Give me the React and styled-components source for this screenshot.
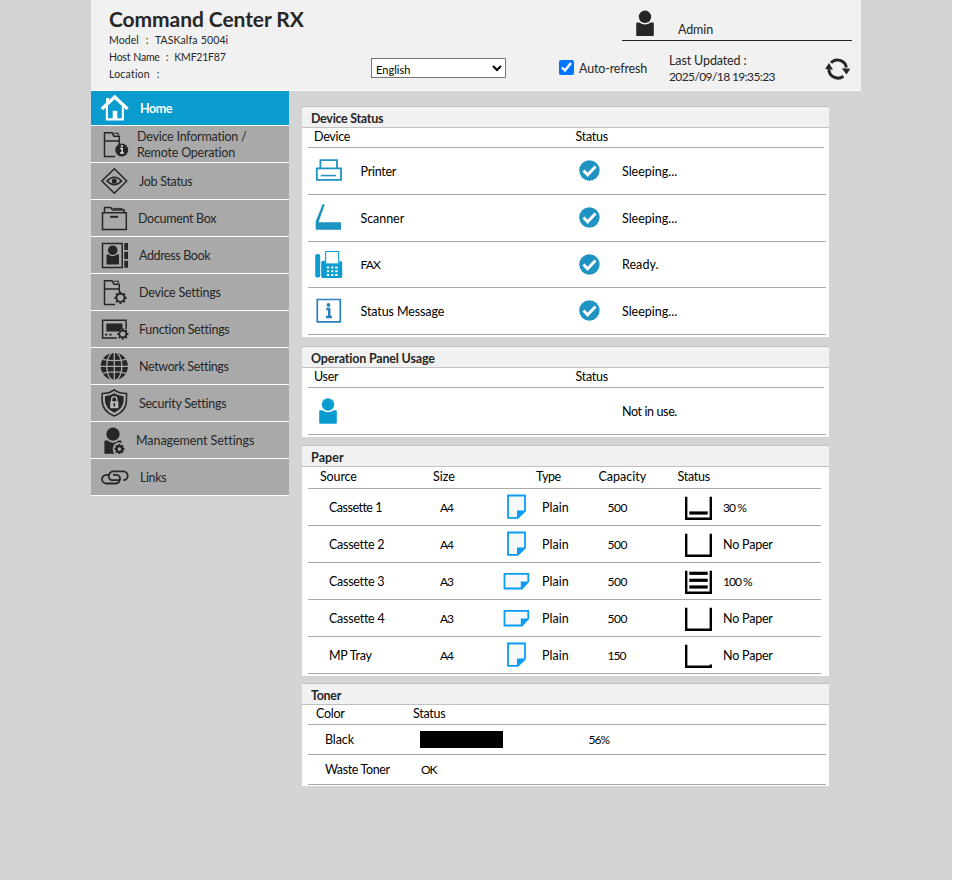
import React from 'react';
import styled, { createGlobalStyle } from 'styled-components';

const GlobalStyle = createGlobalStyle`
  *, *::before, *::after { box-sizing: border-box; }
  body { margin: 0; background: #fff; }
`;

const INK = '#262626';
const BLUE = '#0a9bcf';
const STEEL = '#1f93c1';

/* Letter-spacing per label, in px */
const tracking = {
  'Auto-refresh': -0.15, Admin: -0.1, 'Last Updated :': -0.12, '2025/09/18 19:35:23': -0.6,
  Home: -0.45, 'Device Information /': -0.22, 'Remote Operation': -0.2, 'Job Status': -0.29,
  'Document Box': -0.31, 'Address Book': -0.38, 'Device Settings': -0.23, 'Function Settings': -0.29,
  'Network Settings': -0.37, 'Security Settings': -0.26, 'Management Settings': -0.06, Links: -0.4,
  'Device Status': -0.3, Device: -0.28, Status: -0.26, Printer: -0.25, Scanner: -0.05, FAX: -0.8,
  'Status Message': -0.11, 'Ready.': 0.05, 'Operation Panel Usage': -0.18, User: -0.33,
  'Not in use.': -0.38, Paper: 0.1, Source: -0.14, Type: -0.4, 'Cassette 1': -0.5,
  'Cassette 2': -0.28, 'Cassette 3': -0.28, 'Cassette 4': -0.25, A4: -1, A3: -1, Plain: 0,
  500: -0.5, 150: -1, '30 %': -0.9, '100 %': -1, 'No Paper': -0.2, 'MP Tray': -0.27,
  Toner: -0.3, Color: -0.25, Black: -0.1, 'Waste Toner': -0.38, OK: -1, '56%': -1,
  'Command Center RX': -0.08, 'Model  :  TASKalfa 5004i': 0.1, 'Host Name  :  KMF21F87': -0.22,
  'Location  :': 0.2,
};

/* Labels whose wide glyphs are set slightly smaller */
const compact = new Set(['A4', 'A3', 'FAX', '500', '150', '30 %', '100 %', 'OK', '56%', '2025/09/18 19:35:23']);

const Tracked = styled.span`
  letter-spacing: ${(p) => p.$ls}px;
  white-space: pre;
  ${(p) => p.$compact && 'font-size: 12px;'}
`;
const Text = ({ children }) => (
  <Tracked $ls={tracking[children] || 0} $compact={compact.has(children)}>{children}</Tracked>
);

const Page = styled.div`
  width: 952px;
  height: 880px;
  padding-left: 91px;
  background: #d4d4d4;
  font: 12.5px/16px Lato, 'Open Sans', sans-serif;
  color: #000;
`;
const Header = styled.header`
  display: grid;
  grid-template-columns: 280px 188px 1fr;
  width: 770px;
  height: 91px;
  background: #f1f1f1;
  border-bottom: 1px solid #fff;
  color: ${INK};
`;
const Brand = styled.div`
  padding: 6px 0 0 18px;
`;
const Title = styled.h1`
  margin: 0;
  font-size: 21px;
  line-height: 26px;
  font-weight: 700;
`;
const Meta = styled.div`
  font-size: 10.5px;
  line-height: 17px;
  word-spacing: 0.6px;
`;
const Language = styled.select`
  width: 135px;
  height: 20px;
  margin-top: 58px;
  padding: 2px 0 0;
  border: 1px solid #767676;
  border-radius: 0;
  background: #fff;
  font: 11px Lato, sans-serif;
  letter-spacing: 0.05px;
  color: #000;
`;
const UserBar = styled.div`
  display: flex;
  width: 230px;
  height: 41px;
  margin-left: 63px;
  padding-left: 13px;
  border-bottom: 1px solid ${INK};
`;
const UserName = styled.span`
  margin: 22px 0 0 23px;
`;
const Tools = styled.div`
  display: flex;
  height: 49px;
`;
const Check = styled.input`
  width: 15px;
  height: 15px;
  margin: 19px 5px 0 0;
`;
const AutoLabel = styled.label`
  width: 90px;
  padding-top: 20px;
`;
const Updated = styled.div`
  display: flex;
  flex-direction: column;
  width: 156px;
  padding-top: 12px;
`;
const Body = styled.div`
  display: flex;
  align-items: flex-start;
  gap: 13px;
`;
const Nav = styled.nav`
  width: 198px;
`;
const NavItem = styled.a`
  display: flex;
  align-items: ${(p) => (p.$active ? 'flex-start' : 'center')};
  height: ${(p) => (p.$active ? 35 : 37)}px;
  padding-left: 9px;
  overflow: hidden;
  border-bottom: 1px solid #fff;
  background: ${(p) => (p.$active ? BLUE : '#a9a9a9')};
  color: ${(p) => (p.$active ? '#fff' : INK)};
  font-weight: ${(p) => (p.$active ? 700 : 400)};
`;
const NavLabel = styled.span`
  display: flex;
  flex-direction: column;
  margin-left: ${(p) => p.$gap}px;
  padding-top: ${(p) => p.$top}px;
`;
const Glyph = styled.svg`
  display: block;
  flex: none;
`;
const Main = styled.main`
  width: 527px;
  padding-top: 15px;
`;
const Panel = styled.section`
  margin-bottom: ${(p) => p.$gap}px;
  padding-bottom: ${(p) => p.$end || 2}px;
  background: #fff;
`;
const PanelTitle = styled.h2`
  height: 22px;
  margin: 0;
  padding: 3px 0 0 9px;
  border: solid #c0c0c0;
  border-width: 1px 0;
  background: #f1f1f1;
  color: ${INK};
  font-size: 12.5px;
  line-height: 17px;
`;
const Grid = styled.div`
  display: grid;
  grid-template-columns: ${(p) => p.$cols};
  align-items: center;
  width: ${(p) => p.$w || 518}px;
  height: ${(p) => p.$h}px;
  margin-left: 6px;
  padding-left: ${(p) => p.$pad || 0}px;
  border-bottom: 1px solid #a9a9a9;
  & > span { padding-top: ${(p) => p.$drop || 0}px; }
`;
const HeadGrid = styled(Grid)`
  align-items: start;
  padding-top: ${(p) => p.$top || 1}px;
`;
const TonerBar = styled.div`
  width: 83px;
  height: 17px;
  margin-left: -1px;
  background: #000;
`;

const Icon = ({ w = 30, h = 36, children, ...rest }) => (
  <Glyph width={w} height={h} viewBox={`0 0 ${w} ${h}`} fill="none" stroke={INK} strokeWidth="1.5" {...rest}>
    {children}
  </Glyph>
);

const Gear = ({ x, y, r, width = 1.8 }) => (
  <g transform={`translate(${x} ${y})`}>
    <circle r={r} strokeWidth={width} />
    {[0, 45, 90, 135, 180, 225, 270, 315].map((a) => (
      <path key={a} d={`M0 ${-r - 0.5}V${-r - 2.1}`} strokeWidth="2.2" transform={`rotate(${a})`} />
    ))}
  </g>
);

const Folder = () => (
  <>
    <path d="M19.3 19V15H4.5V6.7H12L14 10.2H19.3V15M4.5 15V30.4H15" />
    <path d="M13.5 7.2H18.3V9" strokeWidth="1.1" />
  </>
);

const navIcons = {
  home: (
    <g stroke="#fff">
      <path d="M1.8 18L14.7 6L27.6 18" strokeWidth="3.2" />
      <path d="M7.6 7V12" strokeWidth="3" />
      <path d="M6.9 15V28.4H22.9V15" strokeWidth="2.2" />
      <path d="M12.7 19.8H17.3V28.5H12.7Z" fill="#fff" stroke="none" />
    </g>
  ),
  info: (
    <>
      <Folder />
      <circle cx="21.7" cy="24" r="6.5" fill={INK} stroke="none" />
      <path d="M20.2 22.6H22.2V27M20 27.1H24" stroke="#ddd" strokeWidth="1.5" />
      <circle cx="21.9" cy="20" r="1.1" fill="#ddd" stroke="none" />
    </>
  ),
  job: (
    <>
      <path d="M14.3 5.8L26.7 18L14.3 30.2L1.9 18Z" />
      <path d="M7 18Q14.3 10.6 21.6 18Q14.3 25.2 7 18Z" strokeWidth="1.6" />
      <circle cx="14.3" cy="18" r="1.8" fill={INK} />
    </>
  ),
  box: (
    <>
      <path d="M2.5 12.7H26.3V29.5H2.5ZM4.5 12.5V7.6H10.7L12.5 10H24.2V12.5" />
      <path d="M13 8.4H22L23 10" strokeWidth="1" />
      <path d="M10 16.8H18" strokeWidth="2" />
    </>
  ),
  book: (
    <>
      <path d="M2.5 6.4H22.2V30.4H2.5Z" />
      <g fill={INK} stroke="none">
        <circle cx="12.7" cy="13.2" r="4.8" />
        <path d="M6.5 17.4H8.6Q12.7 21 16.8 17.4H19V27.5H6.5Z" />
        <path d="M24.3 6H28V13H24.3ZM24.3 14.7H28V22H24.3ZM24.3 23.8H28V30.8H24.3Z" />
      </g>
    </>
  ),
  device: (
    <>
      <Folder />
      <Gear x={20.5} y={23.8} r={4} />
    </>
  ),
  func: (
    <>
      <path d="M17 27H2.6V9.2H26.1V18" />
      <path d="M6.3 12.4H22.5V17.5L18 20.5H6.3Z" fill={INK} stroke="none" />
      <path d="M5 23.7H7.2M9.4 23.7H11.6" strokeWidth="1.8" />
      <Gear x={22.8} y={23} r={3.5} />
    </>
  ),
  network: (
    <>
      <circle cx="14.3" cy="18.3" r="13.6" fill={INK} stroke="none" />
      <g stroke="#a9a9a9" strokeWidth="1.3">
        <path d="M14.3 4V33M0 18.3H29M2.5 11.3Q14.3 14 26.1 11.3M2.5 25.3Q14.3 22.6 26.1 25.3" />
        <ellipse cx="14.3" cy="18.3" rx="7.6" ry="14.2" />
      </g>
    </>
  ),
  security: (
    <>
      <path d="M14.3 4.8Q19.5 8.6 26.5 8.5V15Q26.5 26.3 14.3 31Q2.1 26.3 2.1 15V8.5Q9.1 8.6 14.3 4.8Z" />
      <path d="M14.3 8.3Q18.4 11 23.6 11.3V15.8Q23.2 23.6 14.3 27.7Q5.4 23.6 5 15.8V11.3Q10.2 11 14.3 8.3Z" fill={INK} stroke="none" />
      <path d="M10.2 16.3H18.4V23.2H10.2Z" fill="#bbb" stroke="none" />
      <path d="M11.7 16.5V14.2A2.6 2.6 0 0 1 16.9 14.2V16.5" stroke="#bbb" strokeWidth="1.4" />
      <path d="M14.3 18V21.5" strokeWidth="1.6" />
    </>
  ),
  manage: (
    <>
      <circle cx="13" cy="12.2" r="6.6" fill={INK} stroke="none" />
      <path d="M4.4 19.6Q4.4 18.6 5.5 18.6H7.5Q13 23 18.5 18.6H20.5Q21.7 18.6 21.7 20V31.7H4.4Z" fill={INK} stroke="none" />
      <circle cx="19.4" cy="27" r="6.7" fill="#a9a9a9" stroke="none" />
      <Gear x={19.4} y={27} r={2.9} width={2.4} />
    </>
  ),
  links: (
    <>
      <path d="M19.5 21.2H12.8A3.7 3.7 0 0 1 9.4 15.3Q10.3 12.4 13.3 12.4H23.3A4.4 4.4 0 0 1 23.3 21.2" strokeWidth="1.8" />
      <path d="M9.5 15.8H6.4A4.3 4.3 0 0 0 6.4 24.5H15.6Q18.7 24.5 19.6 21.5A3.8 3.8 0 0 0 16.2 15.8H13" strokeWidth="1.8" />
    </>
  ),
};

const navItems = [
  { icon: 'home', lines: ['Home'], gap: 10, active: true },
  { icon: 'info', lines: ['Device Information /', 'Remote Operation'], gap: 7 },
  { icon: 'job', lines: ['Job Status'], gap: 9 },
  { icon: 'box', lines: ['Document Box'], gap: 8 },
  { icon: 'book', lines: ['Address Book'], gap: 9 },
  { icon: 'device', lines: ['Device Settings'], gap: 9 },
  { icon: 'func', lines: ['Function Settings'], gap: 9 },
  { icon: 'network', lines: ['Network Settings'], gap: 9 },
  { icon: 'security', lines: ['Security Settings'], gap: 9 },
  { icon: 'manage', lines: ['Management Settings'], gap: 6 },
  { icon: 'links', lines: ['Links'], gap: 10 },
];

const Person = ({ color, h, y }) => (
  <Icon w={20} h={h} stroke="none" fill={color}>
    <circle cx="10" cy={y + 6.3} r="6.2" />
    <path transform={`translate(0 ${y})`} d="M1.2 13Q1.2 12 2.2 12H4.2Q10 16 15.8 12H17.8Q18.8 12 18.8 13V24.6Q18.8 25.6 17.8 25.6H2.2Q1.2 25.6 1.2 24.6Z" />
  </Icon>
);

const deviceIcons = {
  Printer: (
    <Icon w={28} h={28} stroke={STEEL}>
      <path d="M1.8 11.3H26V22.8H1.8ZM5.4 11V3.2H22V11" strokeWidth="1.8" />
      <path d="M5.8 18.6H21" strokeWidth="1.5" />
    </Icon>
  ),
  Scanner: (
    <Icon w={28} h={28} fill={STEEL} stroke="none">
      <path d="M7.7 0L9.7 0.6L3.6 18.3H26V25.8H0.7V17.3Z" />
    </Icon>
  ),
  FAX: (
    <Icon w={28} h={28} fill={BLUE} stroke="none">
      <rect x="0.2" y="3" width="5" height="23.5" rx="2" />
      <path d="M6.2 11.4Q6.2 9.7 7.7 9.7H10.2V11.9H24.5V9.7Q27.2 9.7 27.2 11.4V25.4Q27.2 26.9 25.2 26.9H8.2Q6.2 26.9 6.2 25.4Z" />
      <path d="M10.7 12.4V0.5H23.7V12.4" fill="#fff" stroke={BLUE} strokeWidth="1.1" />
      <path d="M11.8 16.6H22.6M11.8 20.3H22.6M11.8 24H22.6" stroke="#fff" strokeWidth="2" strokeDasharray="2.4 1.8" />
    </Icon>
  ),
  'Status Message': (
    <Icon w={28} h={28} stroke="#2a7fbd">
      <path d="M2.3 2.5H25.3V24.8H2.3Z" strokeWidth="1.7" />
      <path d="M11.2 12H14.2V19.5M10.9 20H17" strokeWidth="2.5" />
      <circle cx="13.5" cy="8" r="1.9" fill="#2a7fbd" stroke="none" />
    </Icon>
  ),
};

const StatusOk = () => (
  <Icon w={22} h={22} stroke="none">
    <circle cx="10.4" cy="10.5" r="10.2" fill={STEEL} />
    <path d="M4.5 10.6L8.6 14.8L16.5 6.6" stroke="#fff" strokeWidth="2.9" />
  </Icon>
);

const Sheet = ({ landscape }) =>
  landscape ? (
    <Icon w={28} h={36} stroke="#0a9cf5">
      <path d="M1.5 10.9H25.3V18.5L19 25.5H1.5Z" fill="#f7f8fa" strokeWidth="1.8" />
      <path d="M25.3 18.5H17.8V25.5H19Z" fill="#0a9cf5" stroke="none" />
    </Icon>
  ) : (
    <Icon w={28} h={36} stroke="#0a9cf5">
      <path d="M5 6.5H22V21.8L14.8 28.8H5Z" fill="#f7f8fa" strokeWidth="1.8" />
      <path d="M22 21.5H14V28.8H15Z" fill="#0a9cf5" stroke="none" />
    </Icon>
  );

const Tray = ({ bars, open }) => (
  <Icon w={28} h={36} stroke="#000" strokeWidth="2.4">
    <path d={open ? 'M1.2 7.7V29.7H27M25.8 30V27.5' : 'M1.2 7.7V29.8H25.8V7.7'} />
    {[24, 17.3, 10.3].slice(0, bars).map((y) => (
      <path key={y} d={`M4.3 ${y}H22.7`} strokeWidth="3.2" />
    ))}
  </Icon>
);

const devices = [
  { name: 'Printer', status: 'Sleeping...', h: 47 },
  { name: 'Scanner', status: 'Sleeping...', h: 47 },
  { name: 'FAX', status: 'Ready.', h: 46 },
  { name: 'Status Message', status: 'Sleeping...', h: 47 },
];

const papers = [
  { source: 'Cassette 1', size: 'A4', cap: '500', status: '30 %', bars: 1 },
  { source: 'Cassette 2', size: 'A4', cap: '500', status: 'No Paper', bars: 0 },
  { source: 'Cassette 3', size: 'A3', cap: '500', status: '100 %', bars: 3 },
  { source: 'Cassette 4', size: 'A3', cap: '500', status: 'No Paper', bars: 0 },
  { source: 'MP Tray', size: 'A4', cap: '150', status: 'No Paper', bars: 0, open: true },
];

export default function App() {
  return (
    <>
      <GlobalStyle />
      <Page>
        <Header>
          <Brand>
            <Title><Text>Command Center RX</Text></Title>
            <Meta><Text>{'Model  :  TASKalfa 5004i'}</Text></Meta>
            <Meta><Text>{'Host Name  :  KMF21F87'}</Text></Meta>
            <Meta><Text>{'Location  :'}</Text></Meta>
          </Brand>
          <Language defaultValue="en">
            <option value="en">English</option>
          </Language>
          <div>
            <UserBar>
              <Person color={INK} h={40} y={10.5} />
              <UserName><Text>Admin</Text></UserName>
            </UserBar>
            <Tools>
              <Check id="auto" type="checkbox" defaultChecked />
              <AutoLabel htmlFor="auto"><Text>Auto-refresh</Text></AutoLabel>
              <Updated>
                <Text>Last Updated :</Text>
                <Text>2025/09/18 19:35:23</Text>
              </Updated>
              <Icon w={26} h={44} strokeWidth="3">
                <path d="M6 21.8A9 9 0 0 1 21.4 26.5M18.3 35.2A9 9 0 0 1 3.8 28.3" />
                <path d="M16.8 27.3L25.3 27.8L21.5 33.4ZM0.2 28L8 28.8L4 22Z" fill={INK} stroke="none" />
              </Icon>
            </Tools>
          </div>
        </Header>
        <Body>
          <Nav>
            {navItems.map((n) => (
              <NavItem key={n.icon} $active={n.active}>
                <Icon>{navIcons[n.icon]}</Icon>
                <NavLabel $gap={n.gap} $top={n.active ? 10 : 2}>
                  {n.lines.map((l) => <Text key={l}>{l}</Text>)}
                </NavLabel>
              </NavItem>
            ))}
          </Nav>
          <Main>
            <Panel $gap={9}>
              <PanelTitle><Text>Device Status</Text></PanelTitle>
              <HeadGrid $cols="261.5px 1fr" $pad={6} $h={20} $w={516}>
                <Text>Device</Text>
                <Text>Status</Text>
              </HeadGrid>
              {devices.map((d) => (
                <Grid key={d.name} $cols="45.5px 218.5px 43px 1fr" $pad={7} $h={d.h} $drop={1}>
                  {deviceIcons[d.name]}
                  <Text>{d.name}</Text>
                  <StatusOk />
                  <Text>{d.status}</Text>
                </Grid>
              ))}
            </Panel>
            <Panel $gap={8}>
              <PanelTitle><Text>Operation Panel Usage</Text></PanelTitle>
              <HeadGrid $cols="261.5px 1fr" $pad={6} $h={20} $w={516}>
                <Text>User</Text>
                <Text>Status</Text>
              </HeadGrid>
              <Grid $cols="304px 1fr" $pad={10} $h={47} $drop={1}>
                <Person color={BLUE} h={27} y={0.2} />
                <Text>Not in use.</Text>
              </Grid>
            </Panel>
            <Panel $gap={7}>
              <PanelTitle><Text>Paper</Text></PanelTitle>
              <HeadGrid $cols="113px 103px 62.5px 79px 1fr" $pad={12} $h={22} $w={513} $top={2}>
                {['Source', 'Size', 'Type', 'Capacity', 'Status'].map((t) => <Text key={t}>{t}</Text>)}
              </HeadGrid>
              {papers.map((p) => (
                <Grid key={p.source} $cols="111px 63px 39px 65.5px 77.5px 38px 1fr" $pad={21} $h={37} $w={513} $drop={2}>
                  <Text>{p.source}</Text>
                  <Text>{p.size}</Text>
                  <Sheet landscape={p.size === 'A3'} />
                  <Text>Plain</Text>
                  <Text>{p.cap}</Text>
                  <Tray bars={p.bars} open={p.open} />
                  <Text>{p.status}</Text>
                </Grid>
              ))}
            </Panel>
            <Panel $gap={0} $end={1}>
              <PanelTitle><Text>Toner</Text></PanelTitle>
              <HeadGrid $cols="97px 1fr" $pad={8} $h={20}>
                <Text>Color</Text>
                <Text>Status</Text>
              </HeadGrid>
              <Grid $cols="96px 167.5px 1fr" $pad={17} $h={30} $drop={1}>
                <Text>Black</Text>
                <TonerBar />
                <Text>56%</Text>
              </Grid>
              <Grid $cols="96px 1fr" $pad={17} $h={30} $drop={1}>
                <Text>Waste Toner</Text>
                <Text>OK</Text>
              </Grid>
            </Panel>
          </Main>
        </Body>
      </Page>
    </>
  );
}
